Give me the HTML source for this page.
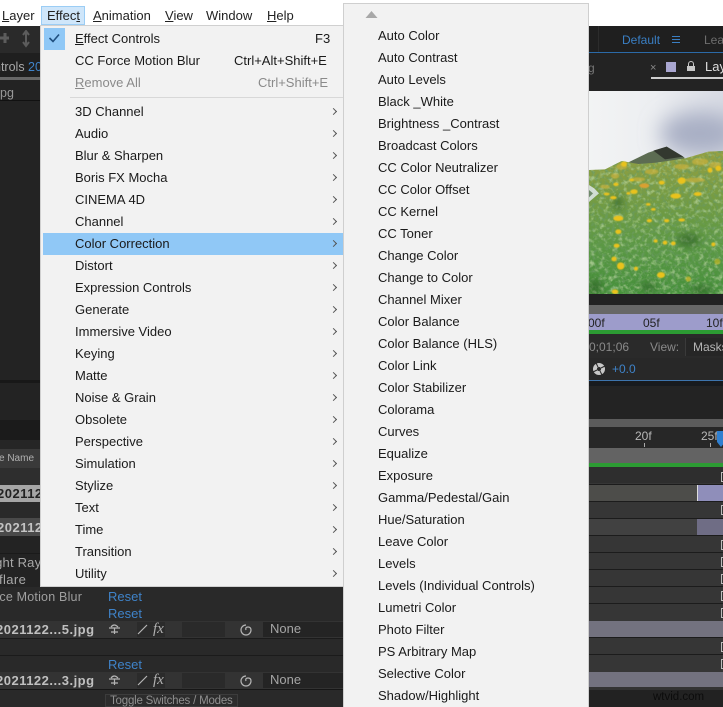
<!DOCTYPE html>
<html><head><meta charset="utf-8">
<style>
html,body{margin:0;padding:0;background:#fff}
#p{position:relative;width:723px;height:707px;overflow:hidden;background:#fff;font-family:"Liberation Sans",sans-serif;font-size:13px;letter-spacing:0;color:#1a1a1a}
#p div{position:absolute}
.t{white-space:nowrap;line-height:22px;height:22px}
.m{white-space:nowrap;line-height:18px;top:7px;color:#222}
.a{left:331px;width:4px;height:4px;border-top:1px solid #555;border-right:1px solid #555;transform:rotate(45deg)}
.g{color:#a9a9a9}
.b{color:#3f83c9}
.r{left:589px;width:134px;height:16px;background:#363636}
.l{left:589px;width:134px;height:1px;background:#1c1c1c}
.k{left:721px;width:2px;height:10px;border-left:1px solid #bbb;border-top:1px solid #bbb;border-bottom:1px solid #bbb;box-sizing:border-box}
</style></head><body><div id="p">

<!-- left dark -->
<div style="left:0;top:26px;width:40px;height:561px;background:#232323"></div>
<div style="left:0;top:26px;width:40px;height:27px;background:#2a2a2a"></div>
<svg style="position:absolute;left:0;top:30px" width="40" height="18" fill="none" stroke="#5c5c5c" stroke-width="3"><path d="M0 8H9M5 3V13"/><path d="M26 2V15M23 5L26 1 29 5M23 12L26 16 29 12" stroke-width="2"/></svg>
<div style="left:0;top:53px;width:40px;height:24px;background:#1f1f1f"></div>
<div class="t" style="left:-6px;top:56px;color:#a8a8a8;font-size:12.5px">ntrols <span class="b">20</span></div>
<div style="left:0;top:77px;width:40px;height:3px;background:#666"></div>
<div class="t" style="left:0;top:82px;color:#999;font-size:12.5px">pg</div>
<div style="left:0;top:100px;width:40px;height:1px;background:#111"></div>
<div style="left:0;top:380px;width:40px;height:3px;background:#181818"></div>
<div style="left:0;top:420px;width:40px;height:20px;background:#1b1b1b"></div>
<div style="left:0;top:440px;width:40px;height:9px;background:#262626"></div>
<div style="left:0;top:449px;width:40px;height:19px;background:#3a3a3a"></div>
<div class="t" style="left:-1px;top:448px;color:#b0b0b0;font-size:10px">e Name</div>
<div style="left:0;top:468px;width:40px;height:17px;background:#2e2e2e"></div>
<div style="left:0;top:485px;width:40px;height:17px;background:#a6a6a6"></div>
<div class="t" style="left:-3px;top:483px;color:#222;font-weight:bold;letter-spacing:.5px">202112</div>
<div style="left:0;top:502px;width:40px;height:16px;background:#2a2a2a"></div>
<div style="left:0;top:518px;width:40px;height:18px;background:#4a4a4a"></div>
<div class="t" style="left:-3px;top:517px;color:#c4c4c4;font-weight:bold;letter-spacing:.5px">202112</div>
<div style="left:0;top:553px;width:40px;height:1px;background:#1a1a1a"></div>
<div class="t" style="left:-8px;top:552px;color:#a8a8a8;letter-spacing:.2px">ight Rays</div>
<div class="t" style="left:-1px;top:569px;color:#a8a8a8;letter-spacing:.4px">flare</div>

<!-- bottom left -->
<div style="left:0;top:587px;width:344px;height:120px;background:#292929"></div>
<div class="t" style="left:-5px;top:586px;color:#9f9f9f;font-size:12.5px;letter-spacing:.2px">rce Motion Blur</div>
<div class="t b" style="left:108px;top:586px">Reset</div>
<div class="t b" style="left:108px;top:603px">Reset</div>
<div style="left:0;top:621px;width:344px;height:17px;background:#333"></div>
<div class="t" style="left:-4px;top:619px;color:#c0c0c0;font-weight:bold;letter-spacing:.5px">2021122...5.jpg</div>
<div style="left:0;top:638px;width:344px;height:1px;background:#1b1b1b"></div>
<div style="left:0;top:655px;width:344px;height:1px;background:#1b1b1b"></div>
<div class="t b" style="left:108px;top:654px">Reset</div>
<div style="left:0;top:672px;width:344px;height:17px;background:#333"></div>
<div class="t" style="left:-4px;top:670px;color:#c0c0c0;font-weight:bold;letter-spacing:.5px">2021122...3.jpg</div>
<div style="left:0;top:689px;width:344px;height:1px;background:#161616"></div>
<div style="left:105px;top:694px;width:133px;height:13px;background:#2c2c2c;border:1px solid #3c3c3c;box-sizing:border-box"></div>
<div class="t" style="left:110px;top:690px;color:#8f8f8f;font-size:11.5px;letter-spacing:-.2px">Toggle Switches / Modes</div>

<!-- switch rows -->
<div style="left:137px;top:622px;width:28px;height:15px;background:#2b2b2b"></div>
<div style="left:137px;top:673px;width:28px;height:15px;background:#2b2b2b"></div>
<div style="left:182px;top:622px;width:43px;height:15px;background:#2a2a2a"></div>
<div style="left:182px;top:673px;width:43px;height:15px;background:#2a2a2a"></div>
<div style="left:263px;top:622px;width:81px;height:15px;background:#242424"></div>
<div style="left:263px;top:673px;width:81px;height:15px;background:#242424"></div>
<div class="t" style="left:270px;top:618px;color:#a5a5a5;font-size:13px">None</div>
<div class="t" style="left:270px;top:669px;color:#a5a5a5;font-size:13px">None</div>
<div class="t" style="left:153px;top:618px;color:#b0b0b0;font-family:'Liberation Serif',serif;font-style:italic;font-size:15px">fx</div>
<div class="t" style="left:153px;top:669px;color:#b0b0b0;font-family:'Liberation Serif',serif;font-style:italic;font-size:15px">fx</div>
<svg style="position:absolute;left:106px;top:622px" width="150" height="66" fill="none" stroke="#b5b5b5" stroke-width="1.2">
<path d="M3 6h11M5 5q3-4 7 0M8.500 6v6M5 10h7M32 12l9-9M140 3a5 5 0 1 0 5 5q0-3-3-3t-2 3"/>
<path d="M3 57h11M5 56q3-4 7 0M8.500 57v6M5 61h7M32 63l9-9M140 54a5 5 0 1 0 5 5q0-3-3-3t-2 3"/>
</svg>

<!-- top right -->
<div style="left:589px;top:26px;width:134px;height:26px;background:#1f1f1f"></div>
<div style="left:598px;top:26px;width:1px;height:26px;background:#2c2c2c"></div>
<div class="t" style="left:622px;top:29px;color:#3a7fc4;font-size:12px">Default</div>
<div style="left:672px;top:36px;width:8px;height:1px;background:#3a7fc4;box-shadow:0 3px 0 #3a7fc4,0 6px 0 #3a7fc4"></div>
<div class="t" style="left:704px;top:29px;color:#6e6e6e;font-size:12px">Lea</div>
<div style="left:589px;top:52px;width:134px;height:1px;background:#2b6aa8"></div>
<div style="left:589px;top:53px;width:134px;height:38px;background:#232323"></div>
<div class="t" style="left:588px;top:57px;color:#777;font-size:12px">g</div>
<div class="t" style="left:650px;top:57px;color:#888;font-size:11px">×</div>
<div style="left:666px;top:62px;width:10px;height:10px;background:#a9a6d0"></div>
<div style="left:687px;top:66px;width:8px;height:5px;background:#c8c8c8"></div>
<div style="left:688px;top:61px;width:4px;height:4px;border:1px solid #c8c8c8;border-bottom:0;border-radius:3px 3px 0 0"></div>
<div class="t" style="left:705px;top:56px;color:#ddd;font-size:13px">Lay</div>
<div style="left:651px;top:77px;width:72px;height:2px;background:#cfcfcf"></div>

<!-- photo -->
<svg style="position:absolute;left:589px;top:91px" width="134" height="204" viewBox="12 3 402 612" preserveAspectRatio="none">
<defs>
<linearGradient id="s" x1="0" y1="0" x2="1" y2="0"><stop offset="0" stop-color="#f3f4f4"/><stop offset=".5" stop-color="#eceef1"/><stop offset="1" stop-color="#d8dbe4"/></linearGradient>
<linearGradient id="gr" x1="0" y1="0" x2="0" y2="1"><stop offset="0" stop-color="#96a042"/><stop offset=".3" stop-color="#789c42"/><stop offset=".65" stop-color="#5b9844"/><stop offset="1" stop-color="#44903a"/></linearGradient>
<clipPath id="c"><path d="M12 240L60 238 110 213 160 222 215 218 300 205 370 185 414 183V630H12Z"/></clipPath>
<filter id="n" x="0" y="0" width="100%" height="100%"><feTurbulence type="fractalNoise" baseFrequency=".1" numOctaves="3" seed="7"/><feColorMatrix values="0 0 0 0 .14  0 0 0 0 .32  0 0 0 0 .12  2.400 0 0 0 -1.050"/></filter>
<filter id="n2" x="0" y="0" width="100%" height="100%"><feTurbulence type="fractalNoise" baseFrequency=".07" numOctaves="3" seed="21"/><feColorMatrix values="0 0 0 0 .5  0 0 0 0 .68  0 0 0 0 .36  2 0 0 0 -1"/></filter>
<filter id="bl"><feGaussianBlur stdDeviation="1.6"/></filter>
<filter id="b2" x="-100%" y="-150%" width="300%" height="400%"><feGaussianBlur stdDeviation="32"/></filter>
<filter id="b3"><feGaussianBlur stdDeviation="10"/></filter>
</defs>
<rect x="0" y="0" width="414" height="630" fill="url(#s)"/>
<ellipse cx="345" cy="130" rx="120" ry="65" fill="#a8afc4" filter="url(#b2)"/>
<path d="M120 222L190 188 245 170 298 202 300 225Z" fill="#5c6c52"/>
<path d="M205 182L245 170 295 200 240 208Z" fill="#33382f"/>
<g clip-path="url(#c)">
<rect x="12" y="180" width="402" height="440" fill="url(#gr)"/>
<rect x="12" y="180" width="402" height="440" filter="url(#n)"/>
<rect x="12" y="180" width="402" height="440" filter="url(#n2)"/>
<g filter="url(#b3)" fill="#2a5f24" opacity=".6">
<ellipse cx="30" cy="590" rx="22" ry="22"/><ellipse cx="350" cy="600" rx="30" ry="14"/><ellipse cx="310" cy="450" rx="34" ry="20"/><ellipse cx="190" cy="590" rx="26" ry="12"/><ellipse cx="100" cy="340" rx="14" ry="22"/>
</g>
</g>
<g fill="#c9b13a" filter="url(#bl)" opacity=".7">
<ellipse cx="110" cy="230" rx="16" ry="9"/><ellipse cx="90" cy="258" rx="12" ry="8"/><ellipse cx="200" cy="245" rx="20" ry="8"/><ellipse cx="290" cy="230" rx="22" ry="8"/><ellipse cx="345" cy="215" rx="25" ry="10"/><ellipse cx="390" cy="225" rx="18" ry="9"/><ellipse cx="60" cy="290" rx="14" ry="6"/><ellipse cx="330" cy="270" rx="30" ry="7"/><ellipse cx="160" cy="268" rx="20" ry="6"/>
</g>
<g fill="#e9c21c" filter="url(#bl)">
<ellipse cx="290" cy="272" rx="12" ry="10"/><ellipse cx="100" cy="385" rx="15" ry="8"/><ellipse cx="100" cy="425" rx="9" ry="7"/><ellipse cx="272" cy="318" rx="16" ry="8"/><ellipse cx="147" cy="305" rx="11" ry="7"/><ellipse cx="178" cy="287" rx="15" ry="7" fill="#d9a030"/><ellipse cx="107" cy="528" rx="11" ry="11"/><ellipse cx="228" cy="555" rx="12" ry="9"/><ellipse cx="90" cy="605" rx="10" ry="7"/><ellipse cx="87" cy="507" rx="8" ry="7"/><ellipse cx="290" cy="390" rx="10" ry="5"/><ellipse cx="245" cy="392" rx="8" ry="5"/><ellipse cx="193" cy="392" rx="8" ry="5"/><ellipse cx="338" cy="312" rx="12" ry="6"/><ellipse cx="375" cy="240" rx="7" ry="8"/><ellipse cx="400" cy="235" rx="9" ry="8"/><ellipse cx="240" cy="458" rx="7" ry="6"/><ellipse cx="265" cy="460" rx="7" ry="6"/><ellipse cx="212" cy="453" rx="6" ry="5"/><ellipse cx="95" cy="467" rx="9" ry="6"/><ellipse cx="153" cy="536" rx="6" ry="6"/><ellipse cx="85" cy="323" rx="10" ry="5"/><ellipse cx="65" cy="312" rx="9" ry="4"/><ellipse cx="130" cy="310" rx="6" ry="4"/><ellipse cx="230" cy="278" rx="9" ry="6"/><ellipse cx="93" cy="283" rx="8" ry="5"/><ellipse cx="117" cy="222" rx="9" ry="8"/><ellipse cx="140" cy="270" rx="7" ry="4"/><ellipse cx="205" cy="358" rx="7" ry="4"/><ellipse cx="190" cy="343" rx="7" ry="4"/><ellipse cx="310" cy="567" rx="8" ry="8" opacity=".6"/><ellipse cx="385" cy="463" rx="6" ry="6"/><ellipse cx="397" cy="515" rx="9" ry="9" opacity=".5"/>
</g>
<path d="M12 285L28 295 42 310 28 322 12 336Z" fill="#dfe8ea" opacity=".85"/>
<path d="M12 300L24 310 12 322Z" fill="#6f8a6a"/>
</svg>

<!-- right lower -->
<div style="left:589px;top:294px;width:134px;height:12px;background:#222"></div>
<div style="left:589px;top:305px;width:134px;height:9px;background:#676767"></div>
<div style="left:589px;top:314px;width:134px;height:16px;background:#9d9ccb"></div>
<div class="t" style="left:588px;top:312px;color:#222;font-size:12px">00f</div>
<div class="t" style="left:643px;top:312px;color:#222;font-size:12px">05f</div>
<div class="t" style="left:706px;top:312px;color:#222;font-size:12px">10f</div>
<div style="left:589px;top:330px;width:134px;height:4px;background:#2c9b33"></div>
<div style="left:589px;top:334px;width:134px;height:24px;background:#2a2a2a"></div>
<div class="t" style="left:589px;top:336px;color:#8a8a8a;font-size:12px">0;01;06</div>
<div class="t" style="left:650px;top:336px;color:#8a8a8a;font-size:12px">View:</div>
<div style="left:685px;top:338px;width:38px;height:18px;background:#262626;border-left:1px solid #3a3a3a"></div>
<div class="t" style="left:693px;top:336px;color:#b5b5b5;font-size:12px">Masks</div>
<div style="left:589px;top:358px;width:134px;height:22px;background:#282828"></div>
<svg style="position:absolute;left:592px;top:362px" width="14" height="14"><circle cx="7" cy="7" r="6" fill="#c8c8c8"/><circle cx="7" cy="7" r="2" fill="#282828"/><path d="M6 5L4 1M9 6L13 4M8 9L10 13M5 8L1 10" stroke="#282828" stroke-width="1"/></svg>
<div class="t" style="left:612px;top:358px;color:#3f83c9;font-size:12px">+0.0</div>
<div style="left:589px;top:380px;width:134px;height:1px;background:#3d74ad"></div>
<div style="left:589px;top:381px;width:134px;height:5px;background:#171a1e"></div>
<div style="left:589px;top:386px;width:134px;height:33px;background:#232323"></div>
<div style="left:589px;top:419px;width:134px;height:8px;background:#5c5c5c"></div>
<div style="left:589px;top:427px;width:134px;height:21px;background:#272727"></div>
<div class="t" style="left:635px;top:425px;color:#b8b8b8;font-size:12px">20f</div>
<div class="t" style="left:701px;top:425px;color:#b8b8b8;font-size:12px">25f</div>
<div style="left:644px;top:443px;width:1px;height:4px;background:#aaa"></div>
<div style="left:710px;top:443px;width:1px;height:4px;background:#aaa"></div>
<svg style="position:absolute;left:717px;top:431px" width="8" height="17"><path d="M0 0H8V11L4 16 0 11Z" fill="#2f7fd0"/></svg>
<div style="left:589px;top:448px;width:134px;height:15px;background:#636363"></div>
<div style="left:589px;top:463px;width:134px;height:4px;background:#2c9b33"></div>
<div style="left:589px;top:467px;width:134px;height:240px;background:#363636"></div>
<div class="r" style="top:467px;background:#2e2e2e"></div>
<div class="l" style="top:484px"></div>
<div class="r" style="top:485px;height:16px;background:#4d4d4a"></div>
<div style="left:697px;top:485px;width:26px;height:16px;background:#8f8eba;border-left:1px solid #ddd;box-sizing:border-box"></div>
<div class="l" style="top:501px"></div>
<div class="r" style="top:519px;background:#414141"></div>
<div style="left:697px;top:519px;width:26px;height:16px;background:#6f6d85"></div>
<div class="l" style="top:518px"></div><div class="l" style="top:535px"></div>
<div class="l" style="top:552px"></div><div class="l" style="top:569px"></div>
<div class="l" style="top:586px"></div><div class="l" style="top:603px"></div>
<div style="left:589px;top:621px;width:134px;height:16px;background:#73727f"></div>
<div class="l" style="top:637px"></div><div class="l" style="top:654px"></div>
<div style="left:589px;top:672px;width:134px;height:15px;background:#73727f"></div>
<div style="left:589px;top:687px;width:134px;height:20px;background:#222"></div>
<div style="left:589px;top:687px;width:134px;height:3px;background:#333"></div>
<div class="k" style="top:472px"></div><div class="k" style="top:505px"></div><div class="k" style="top:540px"></div><div class="k" style="top:557px"></div><div class="k" style="top:574px"></div><div class="k" style="top:591px"></div><div class="k" style="top:608px"></div><div class="k" style="top:642px"></div><div class="k" style="top:659px"></div>
<div class="t" style="left:653px;top:686px;color:#0c0c0c;font-size:11.500px">wtvid.com</div>

<!-- menu bar -->
<div style="left:41px;top:6px;width:44px;height:19px;background:#cfe6fa;border:1px solid #9bcdf5;box-sizing:border-box"></div>
<div class="m" style="left:2px"><u>L</u>ayer</div>
<div class="m" style="left:47px">Effec<u>t</u></div>
<div class="m" style="left:93px"><u>A</u>nimation</div>
<div class="m" style="left:165px"><u>V</u>iew</div>
<div class="m" style="left:206px">Window</div>
<div class="m" style="left:267px"><u>H</u>elp</div>

<!-- main menu -->
<div style="left:40px;top:25px;width:304px;height:562px;background:#f2f2f2;border:1px solid #d0d0d0;border-right:0;box-sizing:border-box"></div>
<div style="left:44px;top:28px;width:21px;height:22px;background:#90c8f6"></div>
<svg style="position:absolute;left:48px;top:32px" width="13" height="12"><path d="M1.500 6L5 9.500 11 2.500" fill="none" stroke="#1f4f7f" stroke-width="1.600"/></svg>
<div style="left:70px;top:97px;width:273px;height:1px;background:#d8d8d8"></div>
<div style="left:43px;top:233px;width:300px;height:22px;background:#90c8f6"></div>

<div class="t" style="left:75px;top:28px"><u>E</u>ffect Controls</div>
<div class="t" style="left:315px;top:28px">F3</div>
<div class="t" style="left:75px;top:50px">CC Force Motion Blur</div>
<div class="t" style="left:234px;top:50px">Ctrl+Alt+Shift+E</div>
<div class="t" style="left:75px;top:72px;color:#8a8a8a"><u>R</u>emove All</div>
<div class="t" style="left:258px;top:72px;color:#8a8a8a">Ctrl+Shift+E</div>

<div class="t" style="left:75px;top:101px">3D Channel</div><div class="a" style="top:109px"></div>
<div class="t" style="left:75px;top:123px">Audio</div><div class="a" style="top:131px"></div>
<div class="t" style="left:75px;top:145px">Blur &amp; Sharpen</div><div class="a" style="top:153px"></div>
<div class="t" style="left:75px;top:167px">Boris FX Mocha</div><div class="a" style="top:175px"></div>
<div class="t" style="left:75px;top:189px">CINEMA 4D</div><div class="a" style="top:197px"></div>
<div class="t" style="left:75px;top:211px">Channel</div><div class="a" style="top:219px"></div>
<div class="t" style="left:75px;top:233px">Color Correction</div><div class="a" style="top:241px"></div>
<div class="t" style="left:75px;top:255px">Distort</div><div class="a" style="top:263px"></div>
<div class="t" style="left:75px;top:277px">Expression Controls</div><div class="a" style="top:285px"></div>
<div class="t" style="left:75px;top:299px">Generate</div><div class="a" style="top:307px"></div>
<div class="t" style="left:75px;top:321px">Immersive Video</div><div class="a" style="top:329px"></div>
<div class="t" style="left:75px;top:343px">Keying</div><div class="a" style="top:351px"></div>
<div class="t" style="left:75px;top:365px">Matte</div><div class="a" style="top:373px"></div>
<div class="t" style="left:75px;top:387px">Noise &amp; Grain</div><div class="a" style="top:395px"></div>
<div class="t" style="left:75px;top:409px">Obsolete</div><div class="a" style="top:417px"></div>
<div class="t" style="left:75px;top:431px">Perspective</div><div class="a" style="top:439px"></div>
<div class="t" style="left:75px;top:453px">Simulation</div><div class="a" style="top:461px"></div>
<div class="t" style="left:75px;top:475px">Stylize</div><div class="a" style="top:483px"></div>
<div class="t" style="left:75px;top:497px">Text</div><div class="a" style="top:505px"></div>
<div class="t" style="left:75px;top:519px">Time</div><div class="a" style="top:527px"></div>
<div class="t" style="left:75px;top:541px">Transition</div><div class="a" style="top:549px"></div>
<div class="t" style="left:75px;top:563px">Utility</div><div class="a" style="top:571px"></div>

<!-- submenu -->
<div style="left:343px;top:3px;width:246px;height:710px;background:#f2f2f2;border:1px solid #cfcfcf;box-sizing:border-box"></div>
<svg style="position:absolute;left:365px;top:11px" width="13" height="8"><path d="M6.500 0L12.500 7H.5Z" fill="#a8a8a8"/></svg>
<div class="t" style="left:378px;top:25px">Auto Color</div>
<div class="t" style="left:378px;top:47px">Auto Contrast</div>
<div class="t" style="left:378px;top:69px">Auto Levels</div>
<div class="t" style="left:378px;top:91px">Black _White</div>
<div class="t" style="left:378px;top:113px">Brightness _Contrast</div>
<div class="t" style="left:378px;top:135px">Broadcast Colors</div>
<div class="t" style="left:378px;top:157px">CC Color Neutralizer</div>
<div class="t" style="left:378px;top:179px">CC Color Offset</div>
<div class="t" style="left:378px;top:201px">CC Kernel</div>
<div class="t" style="left:378px;top:223px">CC Toner</div>
<div class="t" style="left:378px;top:245px">Change Color</div>
<div class="t" style="left:378px;top:267px">Change to Color</div>
<div class="t" style="left:378px;top:289px">Channel Mixer</div>
<div class="t" style="left:378px;top:311px">Color Balance</div>
<div class="t" style="left:378px;top:333px">Color Balance (HLS)</div>
<div class="t" style="left:378px;top:355px">Color Link</div>
<div class="t" style="left:378px;top:377px">Color Stabilizer</div>
<div class="t" style="left:378px;top:399px">Colorama</div>
<div class="t" style="left:378px;top:421px">Curves</div>
<div class="t" style="left:378px;top:443px">Equalize</div>
<div class="t" style="left:378px;top:465px">Exposure</div>
<div class="t" style="left:378px;top:487px">Gamma/Pedestal/Gain</div>
<div class="t" style="left:378px;top:509px">Hue/Saturation</div>
<div class="t" style="left:378px;top:531px">Leave Color</div>
<div class="t" style="left:378px;top:553px">Levels</div>
<div class="t" style="left:378px;top:575px">Levels (Individual Controls)</div>
<div class="t" style="left:378px;top:597px">Lumetri Color</div>
<div class="t" style="left:378px;top:619px">Photo Filter</div>
<div class="t" style="left:378px;top:641px">PS Arbitrary Map</div>
<div class="t" style="left:378px;top:663px">Selective Color</div>
<div class="t" style="left:378px;top:685px">Shadow/Highlight</div>
</div></body></html>
